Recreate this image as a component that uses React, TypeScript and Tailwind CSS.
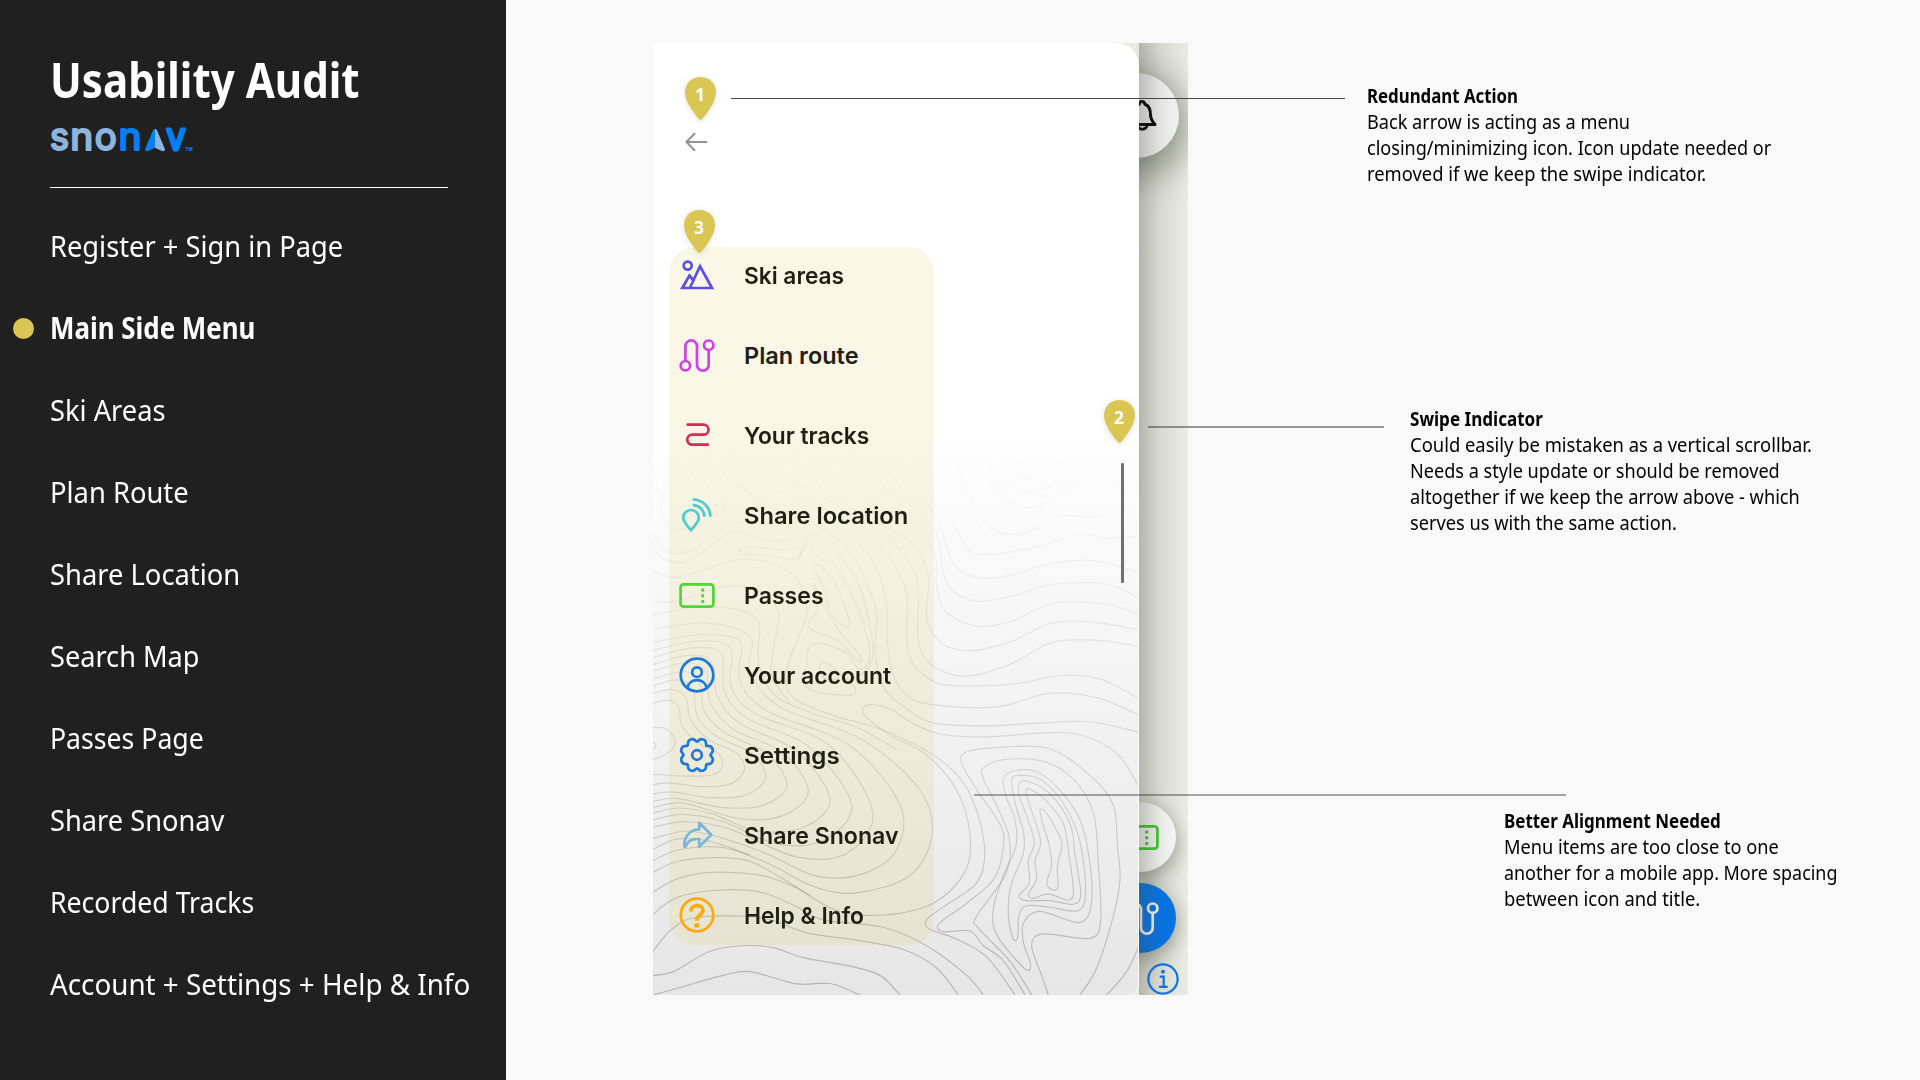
import React, { useLayoutEffect, useRef, useState } from "react";

type Pt = [number, number];

/** Smooth Catmull-Rom spline through a list of points. */
function spline(p: Pt[], closed = false): string {
  const n = p.length;
  const at = (i: number): Pt => (closed ? p[(i + n) % n] : p[Math.max(0, Math.min(n - 1, i))]);
  let d = `M${p[0][0]} ${p[0][1]}`;
  for (let i = 0; i < (closed ? n : n - 1); i++) {
    const [a, b, c, e] = [at(i - 1), at(i), at(i + 1), at(i + 2)];
    d += `C${b[0] + (c[0] - a[0]) / 6} ${b[1] + (c[1] - a[1]) / 6} ${c[0] - (e[0] - b[0]) / 6} ${c[1] - (e[1] - b[1]) / 6} ${c[0]} ${c[1]}`;
  }
  return closed ? d + "Z" : d;
}

/** One line of text, condensed or widened to a given width. */
function Line({ w, className = "", children }: { w: number; className?: string; children: React.ReactNode }) {
  const ref = useRef<HTMLSpanElement>(null);
  const [scale, setScale] = useState(1);
  useLayoutEffect(() => {
    const natural = ref.current?.offsetWidth ?? 0;
    if (natural) setScale(w / natural);
  }, [w]);
  return (
    <span ref={ref} className={`block w-max origin-left whitespace-nowrap ${className}`} style={{ transform: `scaleX(${scale})` }}>
      {children}
    </span>
  );
}

const NAV: { label: string; w: number; active?: boolean }[] = [
  { label: "Register + Sign in Page", w: 293 },
  { label: "Main Side Menu", w: 205.5, active: true },
  { label: "Ski Areas", w: 115.5 },
  { label: "Plan Route", w: 139 },
  { label: "Share Location", w: 190 },
  { label: "Search Map", w: 150 },
  { label: "Passes Page", w: 153.5 },
  { label: "Share Snonav", w: 174.5 },
  { label: "Recorded Tracks", w: 204 },
  { label: "Account + Settings + Help & Info", w: 420 },
];

const OPEN: Pt[][] = [
  [[1145, 1553], [1080, 1462], [985, 1372], [980, 1340], [1068, 1225], [1078, 1130], [1042, 1045], [998, 965], [1003, 937], [1065, 917], [1180, 922], [1270, 970], [1330, 1060], [1345, 1200], [1352, 1350], [1320, 1400], [1180, 1388], [1145, 1420], [1175, 1500], [1195, 1553]],
  [[1125, 1553], [1060, 1460], [1000, 1420], [960, 1380], [880, 1382], [867, 1360], [950, 1305], [1035, 1235], [1062, 1130], [1035, 1070], [985, 1005], [936, 930], [942, 900], [1010, 887], [1190, 886], [1320, 960], [1390, 1040], [1402, 1150], [1410, 1240], [1390, 1340], [1340, 1480], [1290, 1553]],
  [[1467, 1420], [1430, 1490], [1370, 1553]],
  [[1095, 1553], [1010, 1450], [915, 1400], [838, 1375], [830, 1350], [880, 1315], [980, 1250], [1004, 1170], [985, 1070], [940, 980], [850, 905], [700, 838], [540, 795], [430, 750], [407, 690], [430, 620], [470, 520], [440, 430], [360, 385], [260, 378], [160, 405], [80, 425], [9, 410]],
  [[1467, 990], [1400, 900], [1290, 850], [1180, 845], [1000, 856], [870, 848], [780, 815], [730, 785], [680, 770], [643, 774], [645, 798], [720, 850], [830, 905], [920, 1000], [960, 1120], [945, 1220], [850, 1305], [700, 1337], [560, 1325], [430, 1260], [320, 1228], [180, 1222], [80, 1240], [9, 1275]],
  [[1467, 843], [1320, 815], [1180, 818], [1000, 826], [850, 818], [770, 780], [700, 720], [675, 620], [680, 520], [640, 420], [590, 345], [510, 290], [470, 285], [440, 318], [350, 325], [250, 300], [170, 350], [100, 385], [40, 375], [9, 350]],
  [[1467, 797], [1340, 750], [1200, 738], [1040, 775], [860, 770], [780, 750], [730, 690], [712, 600], [710, 500], [680, 400], [610, 320], [500, 260], [380, 240], [230, 150], [160, 60]],
  [[1467, 752], [1350, 700], [1230, 690], [1100, 712], [950, 718], [860, 710], [790, 660], [770, 590], [770, 470], [720, 370], [640, 300], [500, 230], [380, 190], [270, 110], [230, 60]],
  [[1467, 612], [1350, 595], [1210, 600], [1080, 660], [950, 692], [850, 665], [805, 600], [805, 480], [790, 400], [700, 310], [560, 230], [420, 150], [330, 60]],
  [[1467, 566], [1320, 545], [1200, 550], [1080, 600], [960, 623], [870, 600], [830, 530], [835, 420], [780, 330], [650, 260], [510, 180], [420, 60]],
  [[1467, 526], [1370, 498], [1210, 495], [1080, 545], [980, 557], [890, 520], [860, 450], [855, 370], [800, 290], [650, 210], [540, 130], [490, 60]],
  [[1467, 483], [1370, 443], [1200, 445], [1090, 475], [980, 490], [900, 455], [875, 390], [865, 320], [820, 260], [690, 170], [580, 60]],
  [[1467, 412], [1330, 380], [1200, 388], [1080, 420], [980, 425], [910, 390], [880, 310], [850, 250], [740, 170], [670, 60]],
  [[1467, 315], [1360, 318], [1280, 308], [1150, 345], [1000, 363], [950, 340], [900, 270], [850, 220], [780, 130], [755, 60]],
  [[915, 80], [935, 160], [970, 230], [1020, 290], [1100, 310], [1180, 285], [1230, 258], [1330, 262], [1405, 240], [1410, 180], [1350, 110], [1325, 60]],
  [[9, 1335], [80, 1290], [200, 1270], [330, 1275], [430, 1310], [520, 1350], [700, 1370], [830, 1420], [950, 1500], [1000, 1553]],
  [[9, 1435], [60, 1380], [130, 1345], [280, 1340], [370, 1352], [470, 1385], [620, 1405], [760, 1430], [860, 1480], [925, 1553]],
  [[9, 1500], [70, 1490], [180, 1435], [280, 1420], [370, 1425], [460, 1452], [600, 1475], [690, 1500], [750, 1553]],
  [[9, 1553], [100, 1530], [220, 1500], [300, 1490], [440, 1523], [540, 1522], [630, 1553]],
  [[9, 830], [50, 835], [75, 865], [60, 895], [9, 918]],
  [[9, 870], [18, 880], [9, 890]],
  [[9, 765], [55, 757], [85, 775], [98, 830], [150, 875], [205, 900], [218, 935], [190, 958], [110, 962], [9, 957]],
  [[9, 738], [70, 728], [108, 750], [122, 810], [180, 865], [260, 900], [283, 945], [240, 983], [150, 990], [60, 980], [9, 985]],
  [[9, 718], [80, 702], [128, 725], [142, 800], [200, 855], [305, 900], [347, 965], [290, 1012], [180, 1020], [70, 1005], [9, 1010]],
  [[9, 698], [100, 680], [148, 705], [162, 785], [225, 845], [350, 900], [411, 988], [340, 1040], [220, 1047], [80, 1022], [9, 1030]],
  [[9, 678], [110, 655], [168, 680], [182, 765], [250, 835], [400, 900], [475, 1003], [400, 1068], [270, 1077], [100, 1035], [9, 1047]],
  [[9, 660], [120, 635], [185, 655], [202, 745], [270, 820], [440, 895], [540, 1025], [460, 1100], [320, 1110], [190, 1065], [90, 1048], [9, 1062]],
  [[9, 642], [130, 615], [215, 632], [222, 730], [290, 805], [480, 885], [605, 1040], [520, 1135], [380, 1145], [220, 1085], [100, 1065], [9, 1080]],
  [[9, 622], [140, 597], [240, 615], [243, 720], [320, 795], [540, 880], [668, 1060], [590, 1170], [440, 1180], [240, 1105], [110, 1085], [9, 1100]],
  [[9, 600], [150, 580], [270, 598], [268, 700], [350, 785], [600, 880], [750, 1040], [740, 1160], [640, 1225], [500, 1232], [360, 1175], [220, 1130], [110, 1110], [9, 1130]],
  [[9, 565], [170, 548], [300, 585], [300, 680], [390, 775], [640, 865], [810, 1000], [846, 1120], [780, 1230], [620, 1277], [490, 1260], [360, 1200], [220, 1155], [90, 1160], [9, 1190]],
  [[9, 527], [120, 507], [240, 508], [325, 545], [325, 650], [370, 740], [480, 790], [620, 830], [740, 890]],
  [[9, 492], [90, 487], [220, 450], [330, 462], [385, 520], [370, 620], [365, 690], [420, 765]],
  [[9, 1222], [80, 1193], [200, 1182], [300, 1192], [400, 1240], [480, 1285]],
  [[9, 1160], [80, 1132], [180, 1138], [300, 1175]],
  [[9, 310], [60, 358], [130, 348], [200, 300], [290, 275], [350, 285], [380, 265], [320, 215], [200, 130], [130, 60]],
  [[60, 60], [110, 130], [200, 200], [230, 230], [200, 260], [130, 290], [60, 290], [32, 245], [50, 180], [40, 110], [20, 60]],
  [[9, 215], [22, 180], [9, 130]],
];

const CLOSED: Pt[][] = [
  [[1170, 1052], [1190, 1063], [1215, 1100], [1236, 1145], [1222, 1205], [1224, 1262], [1205, 1268], [1190, 1250], [1205, 1200], [1195, 1140], [1178, 1090]],
  [[1128, 1005], [1142, 998], [1190, 1030], [1240, 1090], [1256, 1170], [1270, 1270], [1255, 1297], [1195, 1280], [1150, 1292], [1135, 1280], [1160, 1240], [1155, 1190], [1172, 1140], [1150, 1070]],
  [[1106, 985], [1130, 975], [1200, 1010], [1260, 1090], [1276, 1180], [1292, 1280], [1270, 1308], [1200, 1298], [1130, 1298], [1107, 1285], [1138, 1250], [1135, 1190], [1153, 1140], [1130, 1070], [1108, 1015]],
  [[1085, 975], [1110, 960], [1180, 975], [1250, 1050], [1290, 1140], [1307, 1270], [1285, 1325], [1200, 1316], [1130, 1312], [1106, 1340], [1104, 1395], [1090, 1402], [1075, 1340], [1082, 1260], [1120, 1170], [1120, 1110], [1100, 1050]],
  [[1060, 970], [1090, 948], [1160, 950], [1230, 1000], [1290, 1080], [1317, 1180], [1325, 1300], [1290, 1357], [1170, 1327], [1122, 1355], [1120, 1410], [1142, 1472], [1122, 1480], [1040, 1390], [1030, 1320], [1060, 1230], [1098, 1150], [1095, 1080], [1067, 1015]],
  [[1025, 120], [1045, 97], [1130, 117], [1240, 120], [1284, 155], [1230, 200], [1150, 236], [1070, 215], [1025, 170]],
  [[1056, 148], [1075, 136], [1150, 158], [1210, 150], [1226, 165], [1190, 180], [1130, 195], [1080, 175]],
  [[492, 400], [515, 395], [560, 450], [597, 540], [588, 557], [545, 525], [520, 450]],
  [[447, 375], [460, 350], [475, 335], [500, 365], [560, 400], [615, 490], [655, 600], [655, 655], [625, 672], [590, 630], [510, 603], [475, 620], [470, 665], [455, 695], [490, 732], [600, 743], [615, 722], [575, 690], [535, 658], [510, 660], [520, 695], [560, 700], [630, 690], [668, 640], [660, 560], [630, 450], [570, 370], [500, 310], [470, 320]],
  [[475, 560], [500, 515], [490, 440], [510, 480], [560, 560], [632, 640], [620, 650], [570, 600]],
  [[268, 350], [290, 342], [400, 350], [445, 345], [440, 375], [350, 366], [290, 362]],
];

function Contours() {
  return (
    <svg className="absolute bottom-0 left-0 h-[575px] w-[486px]" viewBox="9 0 1458 1553" preserveAspectRatio="none" fill="none">
      <defs>
        <linearGradient id="fade" gradientUnits="userSpaceOnUse" x1="0" y1="40" x2="0" y2="1553">
          <stop offset="0" stopColor="#777" stopOpacity="0" />
          <stop offset="0.3" stopColor="#777" stopOpacity="0.11" />
          <stop offset="0.6" stopColor="#777" stopOpacity="0.24" />
          <stop offset="1" stopColor="#777" stopOpacity="0.46" />
        </linearGradient>
      </defs>
      <g stroke="url(#fade)" strokeWidth="3.2">
        {OPEN.map((p, i) => (
          <path key={i} d={spline(p)} />
        ))}
        {CLOSED.map((p, i) => (
          <path key={i} d={spline(p, true)} />
        ))}
      </g>
    </svg>
  );
}

const gear = spline(
  Array.from({ length: 96 }, (_, i): Pt => {
    const t = (i / 96) * Math.PI * 2;
    const r = 15.4 - 1.6 * Math.cos(8 * t) - 0.35 * Math.cos(16 * t);
    return [18 + r * Math.cos(t), 18 + r * Math.sin(t)];
  }),
  true
);

const Ticket = () => (
  <>
    <rect x="1.6" y="7.3" width="32.8" height="22.4" rx="3" />
    <g fill="currentColor" stroke="none">
      <circle cx="23.7" cy="13" r="1.7" />
      <circle cx="23.7" cy="18.7" r="1.7" />
      <circle cx="23.7" cy="24.5" r="1.7" />
    </g>
  </>
);

const Route = () => (
  <>
    <circle cx="6.4" cy="28.7" r="4.7" />
    <circle cx="29.7" cy="8.2" r="4.7" />
    <path d="M6.4 24V9.2a5.8 5.8 0 0 1 11.6 0v18.6a5.85 5.85 0 0 0 11.7 0V13" />
  </>
);

const ITEMS: { label: string; w: number; color: string; icon: React.ReactNode }[] = [
  {
    label: "Ski areas", w: 100.5, color: "text-[#5b4fe8]",
    icon: <g strokeLinejoin="miter"><circle cx="8.7" cy="8.6" r="4" /><path d="M10.8 31 21 9.3 33 31ZM14.6 23.5 10.4 18.6 3.3 31h8" /></g>,
  },
  { label: "Plan route", w: 115, color: "text-[#cc42e6]", icon: <Route /> },
  { label: "Your tracks", w: 125, color: "text-[#d62b57]", icon: <path d="M8.7 7.7h15.8a5 5 0 0 1 0 10H13.2a5 5 0 0 0 0 10h15.6" /> },
  {
    label: "Share location", w: 164.5, color: "text-[#4dcbd2]",
    icon: <g strokeLinecap="butt" strokeLinejoin="miter"><path d="M12 33.2C8.6 29 4.2 25 4.2 20.8a7.8 7.8 0 0 1 15.6 0C19.8 25 15.4 29 12 33.2ZM13.7 2.5c9.6 0 17.7 7.6 17.7 17.2M13.7 8.2c6.6 0 11.7 5 11.7 11.5" /></g>,
  },
  { label: "Passes", w: 79.5, color: "text-[#4fd632]", icon: <Ticket /> },
  {
    label: "Your account", w: 147.5, color: "text-[#1f78d8]",
    icon: <><circle cx="18" cy="18" r="16.3" /><circle cx="18" cy="15.2" r="4.8" /><path d="M8.4 31c.6-5 4.8-7.8 9.6-7.8s9 2.8 9.6 7.8" /></>,
  },
  { label: "Settings", w: 95.5, color: "text-[#1f78d8]", icon: <><path d={gear} /><circle cx="18" cy="18" r="4.8" /></> },
  {
    label: "Share Snonav", w: 154.5, color: "text-[#75b8da]",
    icon: <path d="M20.2 5.8 32.3 17.8 20.2 29.7v-7.5c-6-.8-11.5 1.3-13.7 7.5H5.4C4.6 20.5 10.5 12.5 20.2 12.4Z" />,
  },
  {
    label: "Help & Info", w: 119.5, color: "text-[#fbab0d]",
    icon: <><circle cx="18" cy="18" r="16.3" /><path strokeWidth="3.8" strokeLinecap="butt" d="M11.8 14.5C11.8 6.8 24 7 24 13.3c0 4.400-6.200 4.600-6.200 10.400" /><path fill="currentColor" stroke="none" d="M15.400 26.300h4.800v4.200h-4.800z" /></>,
  },
];

function Icon({ className = "", children }: { className?: string; children: React.ReactNode }) {
  return (
    <svg viewBox="0 0 36 36" className={`h-9 w-9 shrink-0 ${className}`} fill="none" stroke="currentColor" strokeWidth="2.7" strokeLinecap="round" strokeLinejoin="round">
      {children}
    </svg>
  );
}

function Pin({ n, className }: { n: number; className: string }) {
  return (
    <div className={`absolute grid h-[43px] w-[31px] drop-shadow-[0_1px_3px_rgba(0,0,0,0.12)] ${className}`}>
      <svg viewBox="0 0 31 43" className="col-start-1 row-start-1 h-[43px] w-[31px]" fill="#dac653">
        <path d="M15.500 0C24.500 0 31 6.600 31 15.200c0 9.500-7.500 18.800-14 27q-1.500 1.600-3 0C7.500 34 0 24.700 0 15.200 0 6.600 6.500 0 15.500 0Z" />
      </svg>
      <span className="col-start-1 row-start-1 w-[30px] text-center font-['Noto_Sans',sans-serif] text-[17.5px] font-bold leading-[35px] text-white">{n}</span>
    </div>
  );
}

function Logo() {
  return (
    <svg viewBox="0 0 144 26" className="mt-[18px] h-[26px] w-[144px] overflow-visible" role="img" aria-label="snonav">
      <g fontFamily="Inter, sans-serif" fontWeight="400" fontSize="37.500" textAnchor="middle" strokeWidth="2.200" strokeLinejoin="round">
        <g fill="#8db4de" stroke="#8db4de">
          <text x="9.4" y="23.4" textLength="19" lengthAdjust="spacingAndGlyphs">s</text>
          <text x="31.8" y="23.4" textLength="23" lengthAdjust="spacingAndGlyphs">n</text>
          <text x="55.8" y="23.4" textLength="22" lengthAdjust="spacingAndGlyphs">o</text>
        </g>
        <g fill="#0080f5" stroke="#0080f5">
          <text x="80" y="23.4" textLength="23" lengthAdjust="spacingAndGlyphs">n</text>
          <text x="126" y="23.4" textLength="19.500" lengthAdjust="spacingAndGlyphs" strokeWidth="3">v</text>
        </g>
      </g>
      <path fill="#0080f5" d="M105 2c-1.100 0-1.800.7-2.200 1.800L95.300 21.500c-.8 2 .8 3.400 2.800 2.500l6.900-3.300Z" />
      <path fill="#8db4de" d="M105 2c1.100 0 1.800.7 2.200 1.800l7.500 17.700c.8 2-.8 3.400-2.800 2.500L105 20.700Z" />
      <text x="135" y="24.3" fill="#0080f5" fontFamily="Inter, sans-serif" fontWeight="700" fontSize="4.8">TM</text>
    </svg>
  );
}

function Note({ title, tw, lines, className }: { title: string; tw: number; lines: [string, number][]; className: string }) {
  return (
    <section className={`text-[19.5px] leading-[26px] text-black ${className}`}>
      <Line w={tw} className="font-bold">{title}</Line>
      {lines.map(([t, w]) => (
        <Line key={t} w={w}>{t}</Line>
      ))}
    </section>
  );
}

export default function App() {
  return (
    <div className="flex h-[1080px] w-[1920px] overflow-hidden bg-[#f9f9f9] font-['Noto_Sans',sans-serif]">
      <aside className="flex w-[506px] shrink-0 flex-col bg-[#202020] pl-[50px] pt-[49px] text-white">
        <h1 className="h-[60px] text-[49px] font-bold leading-[60px]">
          <Line w={310}>Usability Audit</Line>
        </h1>
        <Logo />
        <hr className="mt-[34px] h-px w-[398px] border-0 bg-white" />
        <nav className="mt-[17px] flex flex-col text-[29.5px] leading-[82px]">
          {NAV.map((n) => (
            <div key={n.label} className="-ml-[37px] flex h-[82px] items-center gap-4">
              <span className={`mt-px size-[21px] shrink-0 rounded-full ${n.active ? "bg-[#dac653]" : ""}`} />
              <Line w={n.w} className={n.active ? "font-bold" : "font-normal"}>{n.label}</Line>
            </div>
          ))}
        </nav>
      </aside>

      <main className="relative flex flex-1">
        <div className="relative ml-[147px] mt-[43px] h-[952px] w-[535px] shrink-0 overflow-hidden bg-[#ebece3]">
          <div className="absolute inset-0 flex flex-col pl-[441px] pt-[30px]">
            <div className="mb-auto flex size-[85px] shrink-0 items-center rounded-full bg-[#f8f8f8] pl-[35px] shadow-[0_10px_34px_8px_rgba(60,66,50,0.5)]">
              <svg className="h-9 w-9" viewBox="0 0 36 36" fill="none" stroke="#000" strokeWidth="3" strokeLinejoin="round">
                <path d="M1 26.500h25c-2.500-3-4.500-5-4.500-9.500 0-5-1.500-9.500-5.600-10.800C15.300 2.500 10.700 2.500 10.200 6.200 6 7.500 4.600 12 4.600 17c0 4.500-2 6.500-3.600 9.500ZM8.500 27c0 5.500 9.500 5.500 9.500 0" />
              </svg>
            </div>
            <div className="ml-3 mb-[11px] flex size-[70px] shrink-0 items-center justify-center rounded-full bg-[#fdfdfd] shadow-[0_6px_18px_2px_rgba(60,66,50,0.38)]">
              <Icon className="-mt-px text-[#3fd02a]"><Ticket /></Icon>
            </div>
            <div className="ml-3 mb-[10px] flex size-[70px] shrink-0 items-center justify-center rounded-full bg-[#0076ee] shadow-[0_6px_18px_2px_rgba(60,66,50,0.38)]">
              <Icon className="text-white"><Route /></Icon>
            </div>
            <svg className="ml-[53px] h-8 w-8 shrink-0" viewBox="0 0 32 32" fill="none" stroke="#0878f2" strokeWidth="2.200">
              <circle cx="16" cy="16" r="14.600" />
              <circle cx="16" cy="8.700" r="1.900" fill="#0878f2" stroke="none" />
              <path d="M12.700 13.700h4v10M12 23.800h8.600" />
            </svg>
          </div>
          <div className="absolute inset-y-0 right-0 w-[49px] bg-linear-to-r from-[rgba(70,72,62,0.33)] via-[rgba(70,72,62,0.11)] via-45% to-transparent" />

          <div className="relative flex h-full w-[486px] items-start overflow-hidden rounded-br-[12px] rounded-tr-[22px] border-r border-white bg-linear-to-b from-white from-40% to-[#e6e6e6]">
            <Contours />
            <div className="relative flex flex-col pl-4 pt-[89px]">
              <svg className="ml-4 h-5 w-[23px]" viewBox="0 0 23 20" fill="none" stroke="#919196" strokeWidth="2" strokeLinecap="round" strokeLinejoin="round">
                <path d="M21.500 10H1.500M9.500 1.700 1.500 10l8 8.300" />
              </svg>
              <ul className="mt-[95px] flex h-[698px] w-[265px] flex-col justify-center rounded-[26px] bg-[rgba(220,200,85,0.15)] font-['Inter',sans-serif] text-[23.5px] font-semibold leading-[80px] text-[#211f10]">
                {ITEMS.map((it) => (
                  <li key={it.label} className="flex h-20 shrink-0 items-center gap-[28.600px] pl-[10.400px]">
                    <Icon className={`-mt-[2px] ${it.color}`}>{it.icon}</Icon>
                    <Line w={it.w}>{it.label}</Line>
                  </li>
                ))}
              </ul>
            </div>
            <div className="relative ml-auto mr-[14px] mt-[420px] h-[120px] w-[3px] rounded-[1px] bg-[#707070]" />
          </div>
        </div>

        <div className="flex flex-col pl-[179px] pt-[83px]">
          <Note
            className="h-[323px]"
            title="Redundant Action"
            tw={151}
            lines={[
              ["Back arrow is acting as a menu", 263.5],
              ["closing/minimizing icon. Icon update needed or", 404],
              ["removed if we keep the swipe indicator.", 339],
            ]}
          />
          <Note
            className="ml-[43px] h-[402px]"
            title="Swipe Indicator"
            tw={133}
            lines={[
              ["Could easily be mistaken as a vertical scrollbar.", 402],
              ["Needs a style update or should be removed", 369.5],
              ["altogether if we keep the arrow above - which", 390],
              ["serves us with the same action.", 267],
            ]}
          />
          <Note
            className="ml-[137px]"
            title="Better Alignment Needed"
            tw={216.5}
            lines={[
              ["Menu items are too close to one", 274.5],
              ["another for a mobile app. More spacing", 333.5],
              ["between icon and title.", 196],
            ]}
          />
        </div>

        <div className="absolute left-[225px] top-[98px] h-px w-[614px] bg-[#47474a]" />
        <div className="absolute left-[642px] top-[426px] h-[2px] w-[236px] bg-[rgba(70,72,70,0.55)]" />
        <div className="absolute left-[468px] top-[794px] h-[2px] w-[592px] bg-[rgba(70,72,70,0.48)]" />
        <Pin n={1} className="left-[179px] top-[77px]" />
        <Pin n={2} className="left-[598px] top-[400px]" />
        <Pin n={3} className="left-[178px] top-[210px]" />
      </main>
    </div>
  );
}
